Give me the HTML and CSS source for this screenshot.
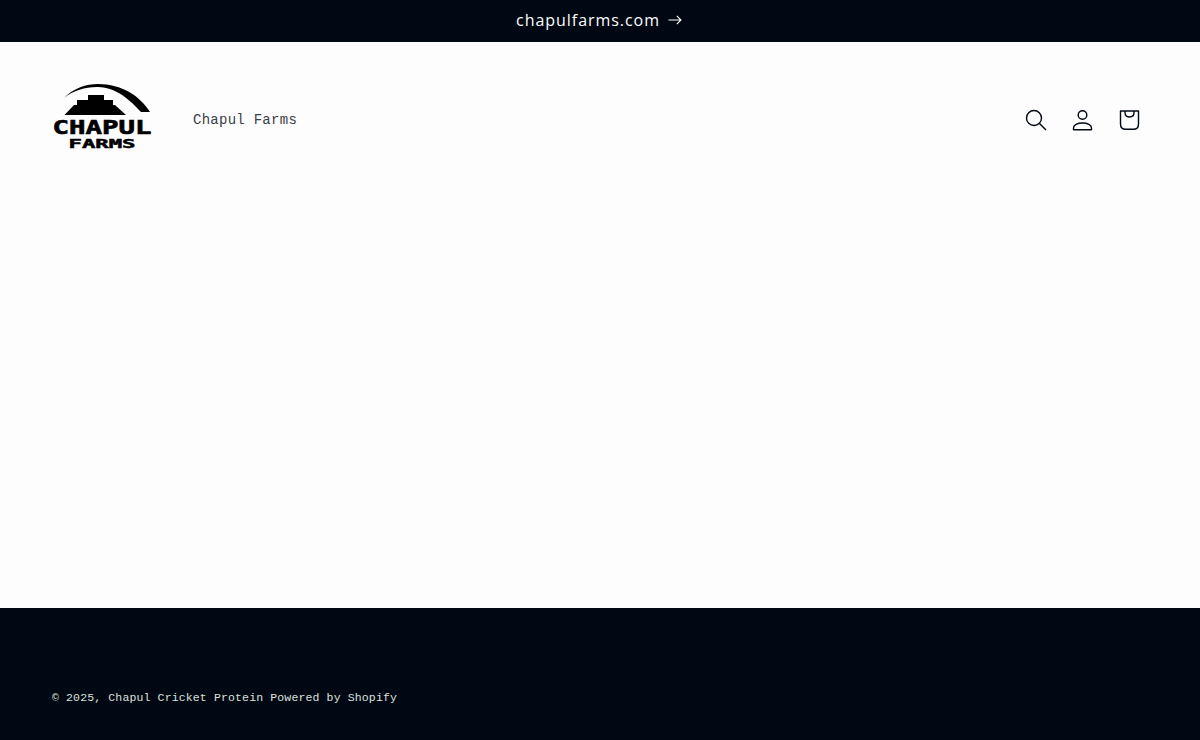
FILE: index.html
```html
<!DOCTYPE html>
<html lang="en">
<head>
<meta charset="utf-8">
<title>Chapul Farms</title>
<link rel="stylesheet" href="styles.css">
</head>
<body>
<div class="announcement">
  <a class="announcement-link" href="#">
    <span>chapulfarms.com</span>
    <svg class="arrow" viewBox="0 0 14 10" width="14" height="10" fill="none" stroke="currentColor" stroke-width="1.1"><path d="M0.5 5H13M8.8 0.8 13 5 8.8 9.2"/></svg>
  </a>
</div>
<header class="header">
  <a class="logo" href="#" aria-label="Chapul Farms">
    <svg class="logo-svg" viewBox="0 0 100 70" width="100" height="70">
      <path class="logo-fill" d="M12 16C22 6 34 2 46 2C70 2 88 14 98 30H89C79 19 65 5.500 46 5C34 4.700 22 8 12 16Z"/>
      <path class="logo-fill" d="M12.500 33 22 23H25V18H36V13H52V18H61V23H63L74 33Z"/>
      <text class="logo-chapul" x="0.500" y="52" textLength="99" lengthAdjust="spacingAndGlyphs">CHAPUL</text>
      <text class="logo-farms" x="16.500" y="66" textLength="67" lengthAdjust="spacingAndGlyphs">FARMS</text>
    </svg>
  </a>
  <nav class="nav"><a class="nav-link" href="#">Chapul Farms</a></nav>
  <div class="icons">
    <svg class="icon" viewBox="0 0 24 24" width="24" height="24" fill="none" stroke="currentColor" stroke-width="1.4"><circle cx="10" cy="10" r="7.500"/><path d="M15.500 15.500 22 22"/></svg>
    <svg class="icon" viewBox="0 0 24 24" width="24" height="24" fill="none" stroke="currentColor" stroke-width="1.4"><circle cx="11.500" cy="7" r="4.300"/><path d="M2.500 21.800V20C2.500 17 6.500 15 11.500 15S20.500 17 20.500 20V21.800Z" stroke-linejoin="round"/></svg>
    <svg class="icon" viewBox="0 0 24 24" width="24" height="24" fill="none" stroke="currentColor" stroke-width="1.4"><path d="M2.500 3H20.500V16C20.500 19.500 18.500 21.300 15.500 21.300H7.500C4.500 21.300 2.500 19.500 2.500 16Z" stroke-linejoin="round"/><path d="M7 3V4.500C7 7.500 9 9 11.500 9S16 7.500 16 4.500V3"/></svg>
  </div>
</header>
<main class="main"></main>
<footer class="footer">
  <p class="copyright">© 2025, Chapul Cricket Protein Powered by Shopify</p>
</footer>
</body>
</html>
```
FILE: styles.css
```css
* { box-sizing: border-box; }
html, body { margin: 0; height: 100%; }
body {
  display: flex;
  flex-direction: column;
  height: 740px;
  overflow: hidden;
  background: #fdfdfd;
  color: #000814;
}
a { color: inherit; text-decoration: none; }
.announcement {
  height: 42px;
  flex: none;
  background: #000814;
  color: #fdfdfd;
  display: flex;
  align-items: center;
  justify-content: center;
  padding-bottom: 2px;
}
.announcement-link {
  display: flex;
  align-items: center;
  gap: 8px;
  font-family: "Open Sans", sans-serif;
  font-size: 16px;
  font-weight: 500;
  letter-spacing: 0.96px;
  margin-left: -2px;
}
.header {
  height: 154px;
  flex: none;
  display: flex;
  align-items: center;
  padding: 0 58px 0 52px;
}
.logo { display: flex; }
.logo-svg { display: block; margin-bottom: 4px; }
.logo-fill { fill: #000; }
.logo-chapul { font-family: "DejaVu Sans Mono", monospace; font-weight: 700; font-size: 19px; fill: #000; stroke: #000; stroke-width: 0.6px; }
.logo-farms { font-family: "DejaVu Sans Mono", monospace; font-weight: 700; font-size: 13px; fill: #000; stroke: #000; stroke-width: 0.5px; }
.nav { margin-left: 41px; }
.nav-link {
  font-family: "Liberation Mono", monospace;
  font-size: 14px;
  letter-spacing: 0.27px;
  color: #3a4048;
}
.icons {
  margin-left: auto;
  display: flex;
  align-items: center;
  gap: 23px;
  padding-top: 2px;
}
.icon { display: block; }
.main { flex: 1; }
.footer {
  height: 132px;
  flex: none;
  background: #000814;
  color: #dfe0dc;
  padding: 83px 52px 0;
}
.copyright {
  margin: 0;
  font-family: "Liberation Mono", monospace;
  font-size: 11.500px;
  letter-spacing: 0.14px;
  line-height: 13px;
}
```
